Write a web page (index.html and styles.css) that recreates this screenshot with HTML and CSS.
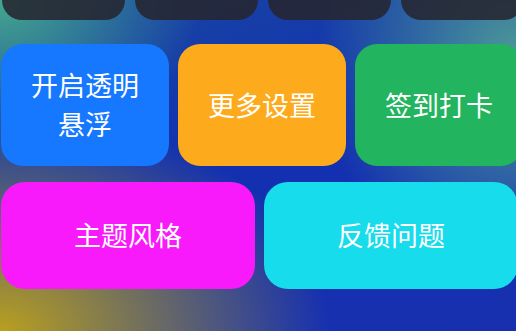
FILE: index.html
```html
<!DOCTYPE html>
<html lang="zh">
<head>
    <meta charset="UTF-8">
    <title>快捷菜单</title>
    <link rel="stylesheet" href="styles.css">
</head>
<body>

<div class="panel">
    <!-- 上一组（被裁切） -->
    <div class="row row-top">
        <div class="tile tile-dark"></div>
        <div class="tile tile-dark"></div>
        <div class="tile tile-dark"></div>
        <div class="tile tile-dark"></div>
    </div>

    <!-- 三列 -->
    <div class="row row-three">
        <button class="tile tile-blue">开启透明<br>悬浮</button>
        <button class="tile tile-orange">更多设置</button>
        <button class="tile tile-green">签到打卡</button>
    </div>

    <!-- 两列 -->
    <div class="row row-two">
        <button class="tile tile-pink">主题风格</button>
        <button class="tile tile-cyan">反馈问题</button>
    </div>
</div>

</body>
</html>
```

FILE: styles.css
```css
html, body {
    margin: 0;
    width: 516px;
    height: 331px;
    overflow: hidden;
}

body {
    font-family: "Noto Sans CJK SC", "Noto Sans", sans-serif;
    background:
        radial-gradient(ellipse 200px 160px at 0 0, rgba(70, 170, 140, 0.95), rgba(70, 170, 140, 0) 100%),
        radial-gradient(ellipse 200px 220px at 516px 60px, rgba(80, 160, 150, 0.95), rgba(80, 160, 150, 0) 100%),
        radial-gradient(ellipse 330px 220px at 0 331px, rgba(185, 160, 30, 1), rgba(185, 160, 30, 0) 100%),
        linear-gradient(160deg, #1a4aa0 0%, #1230b0 45%, #1830b0 100%);
}

.panel {
    padding-left: 1px;
}

.row {
    display: flex;
    gap: 9px;
}

.tile {
    flex: none;
    display: flex;
    align-items: center;
    justify-content: center;
    border: none;
    padding: 0;
    color: #fff;
    font-family: inherit;
    font-size: 27px;
    line-height: 39px;
    text-align: center;
    border-radius: 22px;
}

/* 顶部被裁掉的一排 */
.row-top {
    gap: 10px;
    margin-top: -100px;
    margin-left: 1px;
}

.tile-dark {
    width: 123px;
    height: 120px;
    border-radius: 20px;
    background: rgba(38, 38, 48, 0.88);
}

.row-three {
    margin-top: 24px;
}

.row-three .tile {
    width: 168px;
    height: 122px;
    padding-bottom: 2px;
}

.row-two {
    margin-top: 16px;
}

.row-two .tile {
    width: 254px;
    height: 107px;
    border-radius: 24px;
    padding-bottom: 2px;
}

.tile-blue { background: #1677ff; }
.tile-orange { background: #fdaa1c; }
.tile-green { background: #22b45e; }
.tile-pink { background: #f81afb; }
.tile-cyan { background: #16dcec; }
```
